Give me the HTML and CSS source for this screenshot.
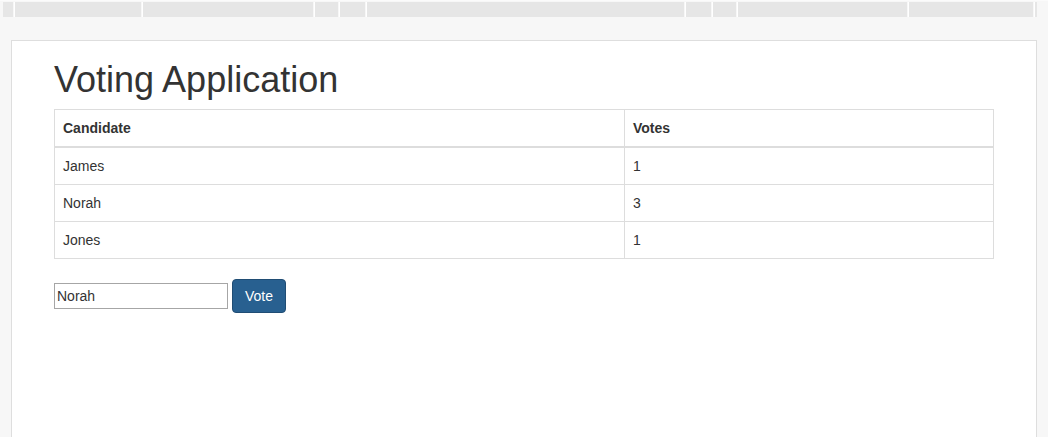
FILE: index.html
```html
<!DOCTYPE html>
<html lang="en">
<head>
<meta charset="utf-8">
<title>Voting Application</title>
<link rel="stylesheet" href="styles.css">
</head>
<body>
<div class="topstrip">
  <span class="seg" style="width:10px"></span>
  <span class="seg" style="width:126px"></span>
  <span class="seg" style="width:170px"></span>
  <span class="seg" style="width:23px"></span>
  <span class="seg" style="width:25px"></span>
  <span class="seg" style="width:317px"></span>
  <span class="seg" style="width:25px"></span>
  <span class="seg" style="width:23px"></span>
  <span class="seg" style="width:169px"></span>
  <span class="seg" style="width:124px"></span>
  <span class="seg" style="width:2px"></span>
</div>
<div class="card">
  <div class="container">
    <h1 class="title">Voting Application</h1>
    <table class="votes">
      <thead>
        <tr><th class="col-name">Candidate</th><th>Votes</th></tr>
      </thead>
      <tbody>
        <tr><td>James</td><td>1</td></tr>
        <tr><td>Norah</td><td>3</td></tr>
        <tr><td>Jones</td><td>1</td></tr>
      </tbody>
    </table>
    <div class="vote-form">
      <input class="vote-input" type="text" value="Norah">
      <button class="vote-btn" type="button">Vote</button>
    </div>
  </div>
</div>
</body>
</html>
```
FILE: styles.css
```css
html, body {
  margin: 0;
  padding: 0;
}
body {
  background: #f7f7f7;
  font-family: "Liberation Sans", Arial, Helvetica, sans-serif;
  font-size: 14px;
  line-height: 20px;
  color: #333;
  height: 437px;
  overflow: hidden;
}
.topstrip {
  display: flex;
  gap: 1px;
  padding: 1px 0 0 3px;
  height: 15px;
  background: #f7f7f7;
  border-top: 1px solid #fbfbfb;
}
.seg {
  display: block;
  height: 15px;
  background: #e6e6e6;
  border-left: 1px solid #ffffff;
}
.seg:first-child {
  border-left: 0;
}
.card {
  margin: 23px 0 0 11px;
  width: 1024px;
  height: 396px;
  background: #fff;
  border: 1px solid #dedede;
  border-bottom: 0;
}
.container {
  width: 940px;
  margin: 0 auto;
  padding-top: 1px;
}
.title {
  font-size: 36px;
  font-weight: 400;
  line-height: 1.1;
  margin: 18px 0 9px;
  color: #333;
}
.votes {
  width: 940px;
  border-collapse: collapse;
  border: 1px solid #ddd;
  margin-bottom: 20px;
}
.votes th,
.votes td {
  border: 1px solid #ddd;
  padding: 8px;
  text-align: left;
  line-height: 20px;
  vertical-align: top;
}
.votes th {
  font-weight: 700;
  border-bottom: 2px solid #ddd;
}
.col-name {
  width: 553px;
}
.vote-form {
  display: flex;
  align-items: center;
  gap: 4px;
}
.vote-input {
  box-sizing: border-box;
  width: 174px;
  height: 26px;
  padding: 2px 2px;
  border: 1px solid #a6a6a6;
  font-family: inherit;
  font-size: 14px;
  line-height: 20px;
  color: #333;
  margin: 1px 0 0;
}
.vote-btn {
  box-sizing: border-box;
  height: 34px;
  padding: 6px 12px;
  background: #286090;
  border: 1px solid #204d74;
  border-radius: 4px;
  color: #fff;
  font-family: inherit;
  font-size: 14px;
  line-height: 20px;
}
```
